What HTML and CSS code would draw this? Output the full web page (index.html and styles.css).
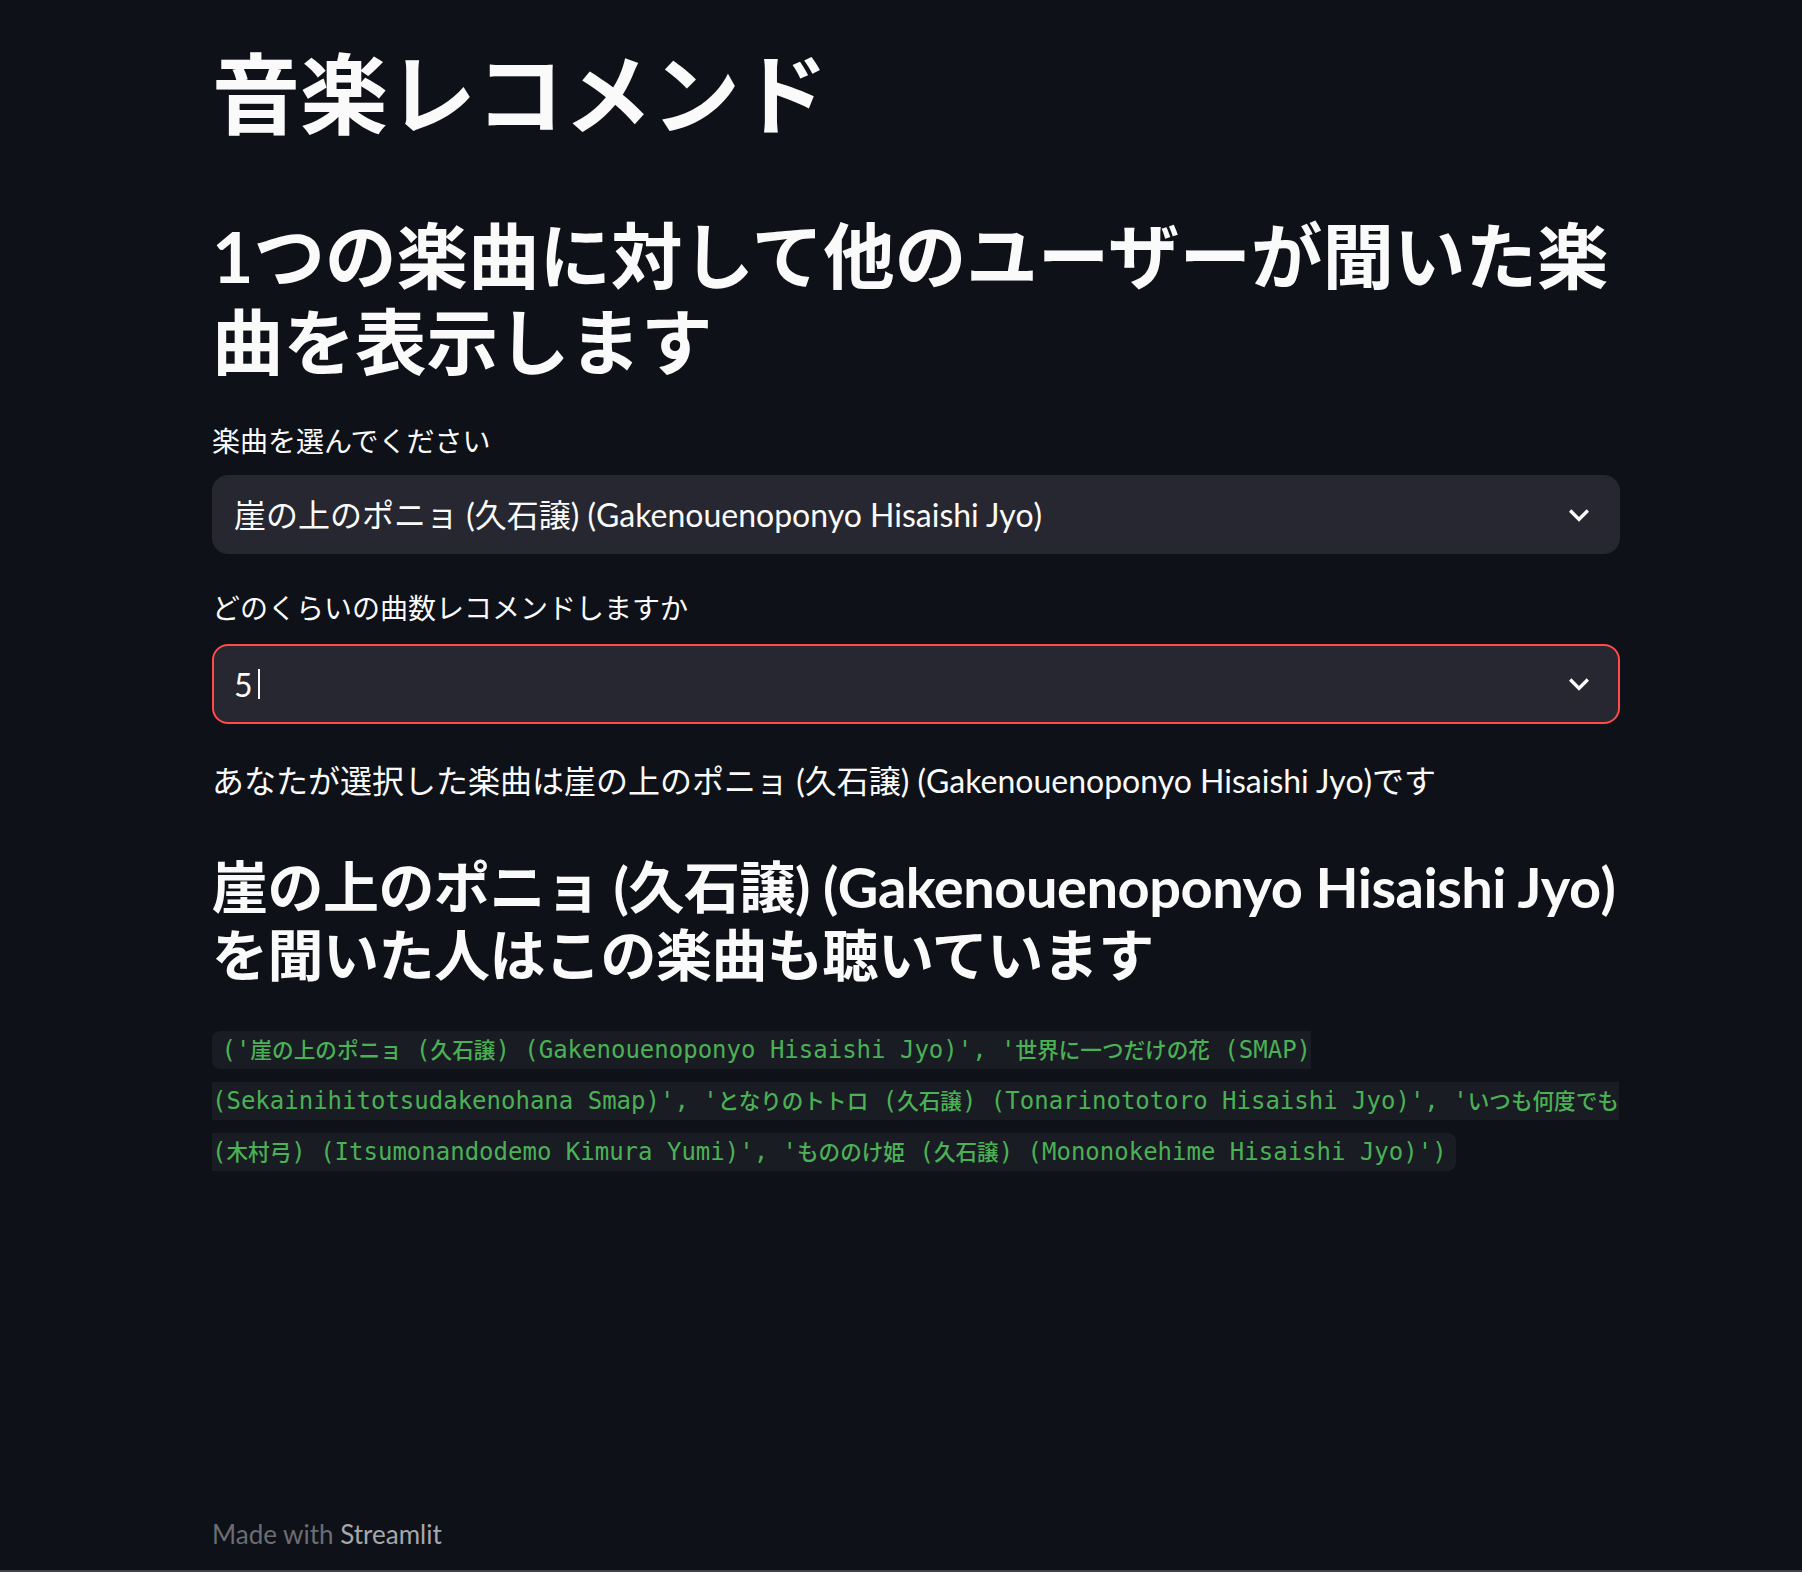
FILE: index.html
```html
<!DOCTYPE html>
<html lang="ja">
<head>
<meta charset="utf-8">
<title>音楽レコメンド</title>
<link rel="stylesheet" href="styles.css">
</head>
<body>
<div class="app">
  <main class="main">
    <h1 class="title">音楽レコメンド</h1>
    <h2 class="subtitle">1つの楽曲に対して他のユーザーが聞いた楽曲を表示します</h2>

    <label class="field-label">楽曲を選んでください</label>
    <div class="select">
      <span class="select-value">崖の上のポニョ (久石譲) (Gakenouenoponyo Hisaishi Jyo)</span>
      <svg class="chevron" viewBox="0 0 24 24" width="40" height="40"><path d="M16.59 8.59L12 13.17 7.41 8.59 6 10l6 6 6-6z" fill="#fafafa"/></svg>
    </div>

    <label class="field-label second">どのくらいの曲数レコメンドしますか</label>
    <div class="select focused">
      <span class="select-value">5<span class="caret"></span></span>
      <svg class="chevron" viewBox="0 0 24 24" width="40" height="40"><path d="M16.59 8.59L12 13.17 7.41 8.59 6 10l6 6 6-6z" fill="#fafafa"/></svg>
    </div>

    <p class="text">あなたが選択した楽曲は崖の上のポニョ (久石譲) (Gakenouenoponyo Hisaishi Jyo)です</p>

    <h3 class="result-title">崖の上のポニョ (久石譲) (Gakenouenoponyo Hisaishi Jyo)を聞いた人はこの楽曲も聴いています</h3>

    <p class="text code-line"><code class="code">('<span class="jp">崖の上のポニョ</span> (<span class="jp">久石譲</span>) (Gakenouenoponyo Hisaishi Jyo)', '<span class="jp">世界に一つだけの花</span> (SMAP) (Sekainihitotsudakenohana Smap)', '<span class="jp">となりのトトロ</span> (<span class="jp">久石譲</span>) (Tonarinototoro Hisaishi Jyo)', '<span class="jp">いつも何度でも</span> (<span class="jp">木村弓</span>) (Itsumonandodemo Kimura Yumi)', '<span class="jp">もののけ姫</span> (<span class="jp">久石譲</span>) (Mononokehime Hisaishi Jyo)')</code></p>
  </main>
  <footer class="footer">Made with <span class="brand">Streamlit</span></footer>
</div>
</body>
</html>
```

FILE: styles.css
```css
html, body {
  margin: 0;
  padding: 0;
}

body {
  background: #0e1117;
  color: #fafafa;
  font-family: Lato, "Noto Sans CJK JP", sans-serif;
  -webkit-font-smoothing: antialiased;
}

.app {
  min-height: 1570px;
  display: flex;
  flex-direction: column;
  border-bottom: 2px solid #404247;
}

.main {
  width: 1408px;
  margin-left: 212px;
  padding-top: 41px;
  display: flex;
  flex-direction: column;
  align-items: flex-start;
}

.title {
  margin: 0;
  font-size: 88px;
  line-height: 1.2;
  font-weight: 700;
}

.subtitle {
  margin: 65px 0 0;
  font-size: 71.5px;
  line-height: 1.21;
  font-weight: 700;
}

.field-label {
  display: block;
  margin-top: 34px;
  font-size: 28px;
  line-height: 1.6;
}

.field-label.second {
  margin-top: 32px;
}

.select {
  align-self: stretch;
  box-sizing: border-box;
  margin-top: 12px;
  height: 79px;
  border: 2px solid #262730;
  border-radius: 16px;
  background: #262730;
  display: flex;
  align-items: center;
  justify-content: space-between;
  padding: 0 19px 0 20px;
  font-size: 32px;
  line-height: 1.6;
}

.select.focused {
  border-color: #ff4b4b;
  margin-top: 13px;
  height: 80px;
}

.select-value {
  display: flex;
  align-items: center;
}

.caret {
  display: inline-block;
  width: 2px;
  height: 30px;
  margin-left: 5px;
  background: #fafafa;
}

.chevron {
  display: block;
}

.text {
  margin: 31px 0 0;
  font-size: 32px;
  line-height: 1.6;
}

.result-title {
  margin: 47px 0 0;
  font-size: 56px;
  line-height: 1.2;
  font-weight: 700;
  letter-spacing: -0.5px;
}

.code-line {
  margin-top: 32px;
}

.code {
  font-family: "DejaVu Sans Mono", "Noto Sans CJK JP", monospace;
  font-size: 24px;
  color: #4bb155;
  background: #1a1c24;
  border-radius: 8px;
  padding: 0.2em 0.4em;
}

.jp {
  font-family: "Noto Sans CJK JP", sans-serif;
  font-size: 21.6px;
  font-weight: 500;
}

.footer {
  margin-top: auto;
  margin-left: 212px;
  padding-bottom: 14px;
  font-size: 26px;
  line-height: 1.6;
  color: #6b6d73;
}

.brand {
  color: #a6a7ab;
}
```
